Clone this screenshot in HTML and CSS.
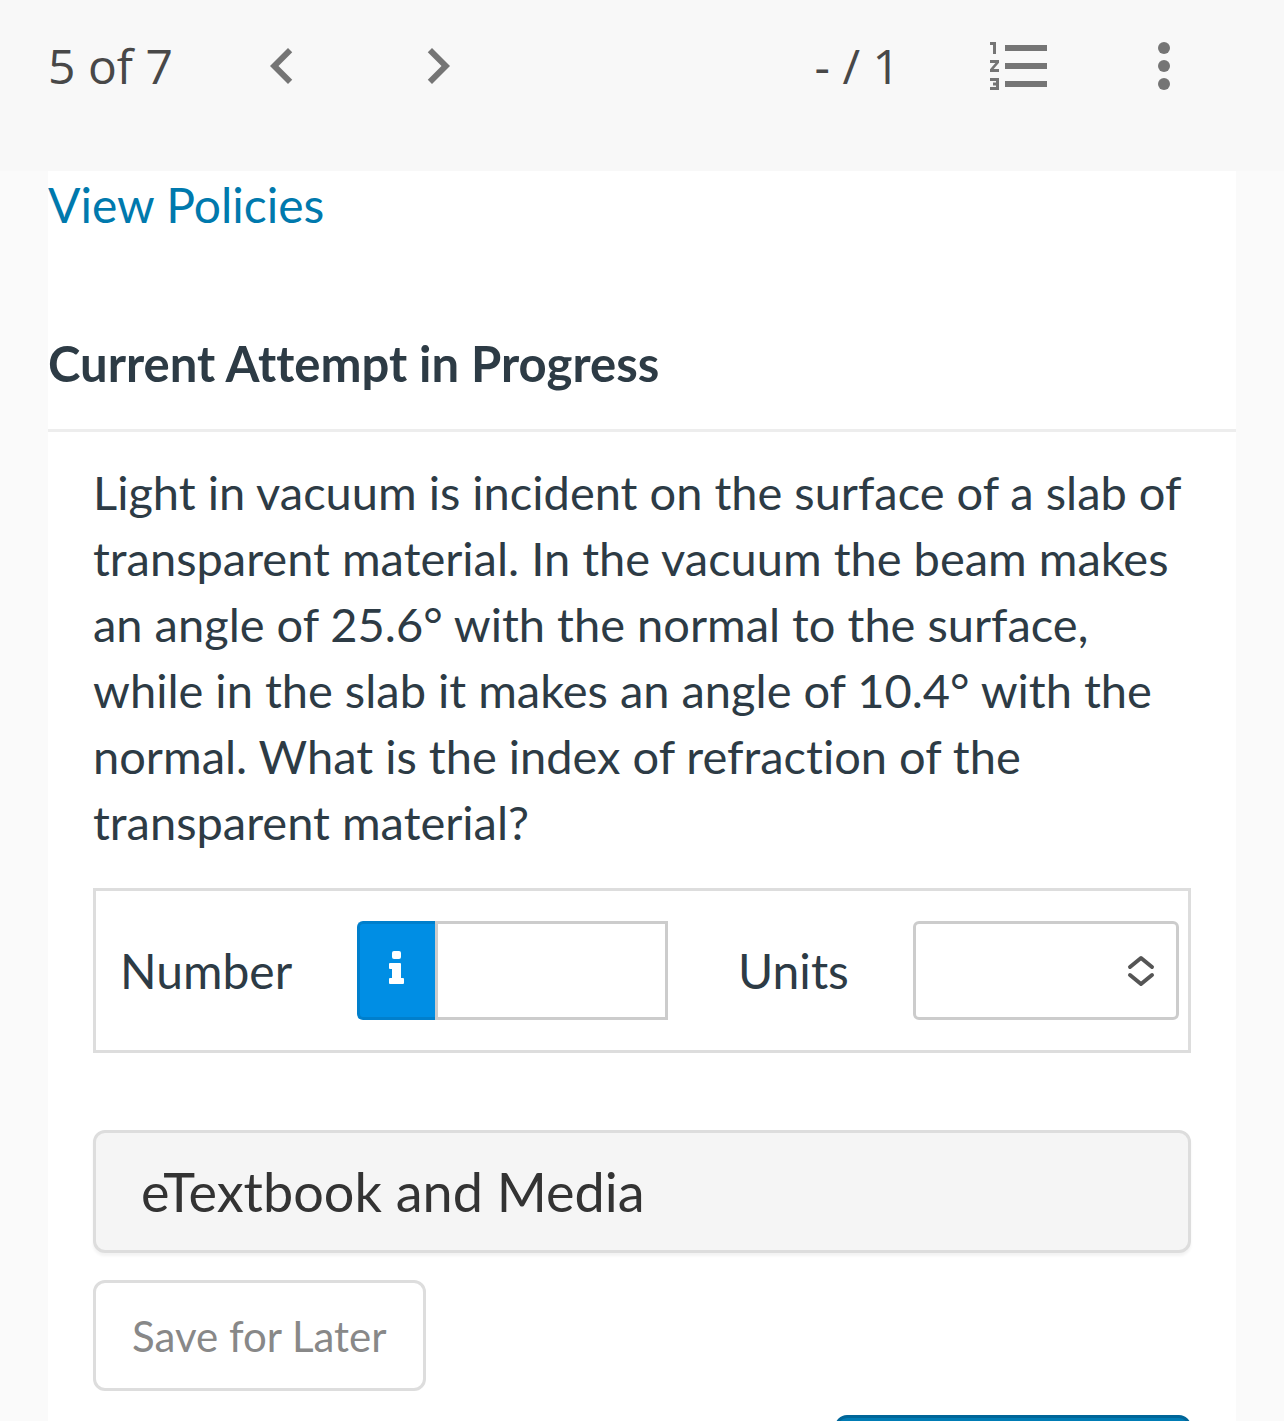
FILE: index.html
```html
<!DOCTYPE html>
<html lang="en">
<head>
  <meta charset="UTF-8">
  <meta name="viewport" content="width=device-width, initial-scale=1.0">
  <title>Question 5 of 7</title>
  <link rel="stylesheet" href="styles.css">
</head>

<body>
  <header class="toolbar">
    <span class="position">5 of 7</span>
    <div class="pager">
      <button class="icon-btn" type="button" aria-label="Previous question">
        <svg viewBox="0 0 24 24"><path d="M15.41 7.41L14 6l-6 6 6 6 1.41-1.41L10.83 12z"/></svg>
      </button>
      <button class="icon-btn" type="button" aria-label="Next question">
        <svg viewBox="0 0 24 24"><path d="M10 6L8.59 7.41 13.17 12l-4.58 4.59L10 18l6-6z"/></svg>
      </button>
    </div>
    <span class="score">- / 1</span>
    <div class="tools">
      <button class="icon-btn" type="button" aria-label="Question list">
        <svg viewBox="0 0 24 24"><path d="M2 17h2v.5H3v1h1v.5H2v1h3v-4H2v1zm1-9h1V4H2v1h1v3zm-1 3h1.8L2 13.1v.9h3v-1H3.2L5 10.9V10H2v1zm5-6v2h14V5H7zm0 14h14v-2H7v2zm0-6h14v-2H7v2z"/></svg>
      </button>
      <button class="icon-btn" type="button" aria-label="More options">
        <svg viewBox="0 0 24 24"><circle cx="12" cy="6" r="2"/><circle cx="12" cy="12" r="2"/><circle cx="12" cy="18" r="2"/></svg>
      </button>
    </div>
  </header>

  <main class="page">
    <a class="policies" href="#policies">View Policies</a>
    <h1>Current Attempt in Progress</h1>

    <form class="question">
      <p>Light in vacuum is incident on the surface of a slab of transparent material. In the vacuum the beam makes an angle of 25.6° with the normal to the surface, while in the slab it makes an angle of 10.4° with the normal. What is the index of refraction of the transparent material?</p>

      <div class="answer">
        <label for="number">Number</label>
        <div class="number-group">
          <button class="info" type="button" aria-label="Number format help">
            <svg viewBox="0 0 15 33"><rect x="3" y="0" width="9" height="8" rx="2"/><path d="M1 12h10q1 0 1 1v14h2q1 0 1 1v4q0 1-1 1H1q-1 0-1-1v-4q0-1 1-1h2v-9H1q-1 0-1-1v-4q0-1 1-1z"/></svg>
          </button>
          <input type="text" id="number">
        </div>
        <label for="units">Units</label>
        <div class="select-wrap">
          <select id="units">
            <option value=""></option>
          </select>
          <svg viewBox="0 0 28 32"><path d="M3 12L14 3l11 9M3 20l11 9 11-9"/></svg>
        </div>
      </div>

      <button class="media" type="button">eTextbook and Media</button>
      <button class="save" type="button">Save for Later</button>
      <button class="submit" type="submit" aria-label="Submit"></button>
    </form>
  </main>
</body>
</html>
```
FILE: styles.css
```css
* {
  box-sizing: border-box;
}

body {
  display: flex;
  flex-direction: column;
  height: 100vh;
  margin: 0;
  overflow: hidden;
  background-color: #fafafa;
  color: #2d3b45;
  font-family: Lato, sans-serif;
  font-size: 48px;
  font-variant-ligatures: none;
  line-height: 66px;
}

button,
input,
select {
  margin: 0;
  font-family: inherit;
  font-size: inherit;
  font-variant-ligatures: inherit;
}

button {
  cursor: pointer;
}

.toolbar {
  display: flex;
  flex: none;
  align-items: center;
  padding: 30px 84px 69px 48px;
  background-color: #f8f8f8;
  color: #484848;
  font-family: "Open Sans", sans-serif;
}

.pager {
  display: flex;
  gap: 84px;
  margin-left: 73px;
}

.score {
  margin-left: auto;
}

.tools {
  display: flex;
  gap: 72px;
  margin-left: 84px;
}

.icon-btn {
  display: block;
  padding: 0;
  border: none;
  background: none;
}

.icon-btn svg {
  display: block;
  width: 72px;
  height: 72px;
  fill: #757575;
}

.page {
  flex: 1;
  min-height: 0;
  margin: 0 48px;
  padding-top: 1px;
  overflow: hidden;
  background-color: #fff;
}

.policies {
  display: block;
  color: #0079ad;
  text-decoration: none;
}

h1 {
  margin: 92px 0 0;
  padding-bottom: 33px;
  border-bottom: 3px solid #ededed;
  font-size: 49px;
  font-weight: bold;
}

.question {
  display: flex;
  flex-direction: column;
  padding: 27px 45px 0;
}

.question p {
  margin: 0 0 33px;
  font-size: 47px;
}

.answer {
  display: grid;
  grid-template-columns: 237px minmax(0, 1fr) 245px 266px;
  align-items: center;
  margin-bottom: 77px;
  padding: 30px 9px 30px 24px;
  border: 3px solid #ddd;
}

.answer label[for="units"] {
  padding-left: 70px;
}

.number-group {
  display: flex;
  height: 99px;
}

.info {
  display: flex;
  flex: none;
  align-items: center;
  justify-content: center;
  width: 78px;
  padding: 0 3px 6px 0;
  border: 3px solid #007fcc;
  border-right: none;
  border-radius: 6px 0 0 6px;
  background-color: #008ee4;
}

.info svg {
  width: 15px;
  height: 33px;
  fill: #fff;
}

.number-group input {
  flex: 1;
  min-width: 0;
  padding: 0 18px;
  border: 3px solid #ccc;
  border-radius: 0;
}

.select-wrap {
  position: relative;
  height: 99px;
}

.select-wrap select {
  width: 100%;
  height: 100%;
  padding: 0 72px 0 18px;
  border: 3px solid #ccc;
  border-radius: 6px;
  background-color: #fff;
  appearance: none;
}

.select-wrap svg {
  position: absolute;
  top: 34px;
  right: 24px;
  width: 28px;
  height: 32px;
  fill: none;
  stroke: #555;
  stroke-width: 4;
  stroke-linecap: round;
  stroke-linejoin: round;
  pointer-events: none;
}

.media {
  height: 123px;
  margin-bottom: 27px;
  padding: 0 45px;
  border: 3px solid #ddd;
  border-radius: 12px;
  background-color: #f5f5f5;
  box-shadow: 0 3px 3px rgba(0, 0, 0, 0.05);
  color: #333;
  font-size: 54px;
  text-align: left;
}

.save {
  align-self: flex-start;
  height: 111px;
  margin-bottom: 24px;
  padding: 0 36px;
  border: 3px solid #ddd;
  border-radius: 12px;
  background-color: #fff;
  color: #888;
  font-size: 42px;
}

.submit {
  align-self: flex-end;
  width: 356px;
  height: 111px;
  border: 3px solid #006699;
  border-radius: 12px;
  background-color: #007cb5;
}
```
